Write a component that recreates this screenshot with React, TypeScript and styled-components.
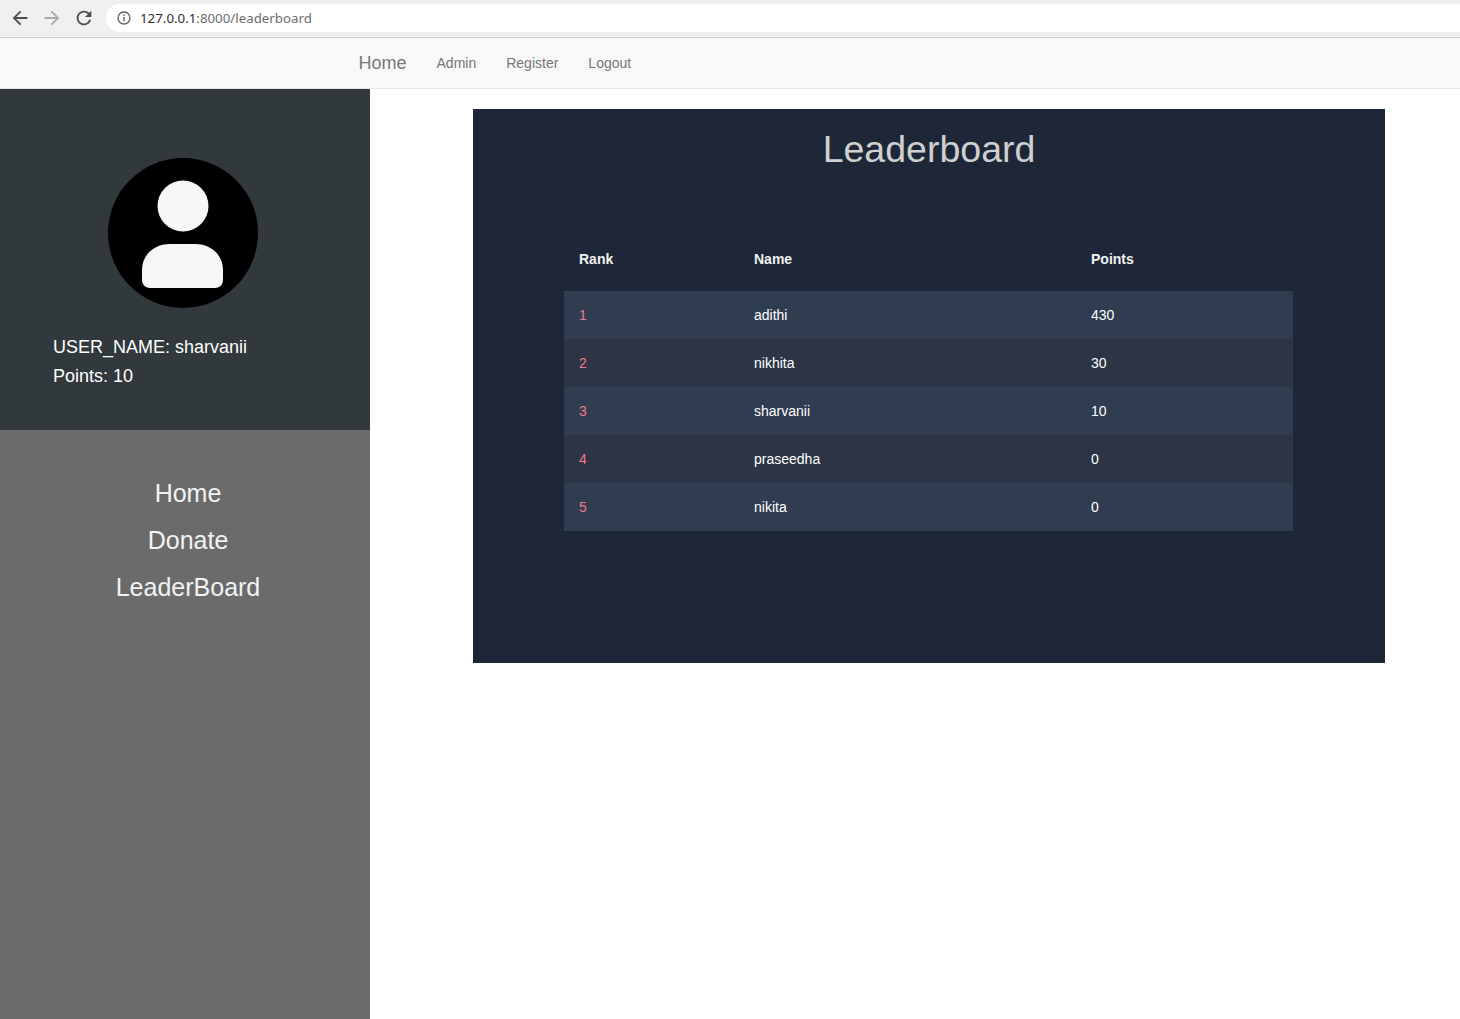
import { createGlobalStyle, styled } from "styled-components"

const GlobalStyle = createGlobalStyle`
html, body {
    margin: 0;
    padding: 0;
    background: #fff;
    font-family: "Liberation Sans", Arial, sans-serif;
}
* {
    box-sizing: border-box;
}
`

const Page = styled.div`
min-height: 100vh;
display: flex;
flex-direction: column;
overflow: hidden;
`

const BrowserBar = styled.div`
height: 38px;
display: flex;
align-items: flex-start;
padding: 4px 0 0 9px;
background: #f1f0ef;
border-bottom: 1px solid #cfcfcf;
`

const BrowserButton = styled.button<{ $dim?: boolean }>`
width: 22px;
height: 28px;
margin-right: 10px;
padding: 0;
display: flex;
align-items: center;
justify-content: center;
border: 0;
background: none;
color: ${({ $dim }) => ($dim ? "#a9a9a9" : "#4c4c4c")};
`

const AddressBar = styled.div`
flex: 1;
height: 28px;
margin-left: 1px;
padding-left: 11px;
display: flex;
align-items: center;
gap: 9px;
background: #fff;
border-radius: 14px 0 0 14px;
font-family: "Noto Sans", sans-serif;
font-size: 13.3px;
color: #6c6c6c;

b {
    font-weight: 400;
    color: #2e2e2e;
}
`

const Navbar = styled.nav`
height: 51px;
padding-left: 343.5px;
display: flex;
align-items: center;
background: #f8f8f8;
border-bottom: 1px solid #e7e7e7;
`

const NavLink = styled.a<{ $brand?: boolean }>`
padding: 0 15px;
color: #777;
font-size: ${({ $brand }) => ($brand ? "18px" : "14px")};
`

const Body = styled.div`
flex: 1;
display: flex;
`

const Sidebar = styled.aside`
width: 370px;
display: flex;
flex-direction: column;
background: #6b6b6b;
`

const Profile = styled.div`
height: 341px;
padding: 69px 0 0 53px;
background: #31393c;
color: #fff;
font-size: 18px;
`

const Avatar = styled.svg`
display: block;
width: 150px;
height: 150px;
margin: 0 0 25px 55px;
`

const ProfileLine = styled.div`
line-height: 29px;
`

const SideMenu = styled.ul`
margin: 0;
padding: 40px 0 0 6px;
list-style: none;
text-align: center;
`

const SideItem = styled.li`
height: 47px;
line-height: 47px;
font-size: 25px;
color: #f2f2f2;
`

const Main = styled.main`
flex: 1;
padding: 20px 0 0 103px;
`

const Panel = styled.section`
width: 912px;
height: 554px;
padding-top: 19px;
background: #1e2738;
`

const Title = styled.h1`
margin: 0;
text-align: center;
font-size: 37.5px;
line-height: 43px;
font-weight: 400;
color: #d0d0d0;
`

const Table = styled.table`
width: 729px;
margin: 56px 0 0 91px;
border-collapse: collapse;
table-layout: fixed;
font-size: 14px;
color: #fff;
`

const HeadCell = styled.th<{ $width: number }>`
width: ${({ $width }) => $width}px;
height: 64px;
padding: 0 0 0 15px;
text-align: left;
font-weight: 700;
color: #f2f2f2;
`

const Row = styled.tr`
&:nth-child(odd) {
    background: #303c50;
}
&:nth-child(even) {
    background: #2c3445;
}
`

const Cell = styled.td<{ $rank?: boolean }>`
position: relative;
height: 48px;
padding: 0 0 0 15px;
color: ${({ $rank }) => ($rank ? "#f27a8c" : "#fff")};
box-shadow: 0 2px 2px -2px #0e1119;
`

const players = [
    { name: "adithi", points: 430 },
    { name: "nikhita", points: 30 },
    { name: "sharvanii", points: 10 },
    { name: "praseedha", points: 0 },
    { name: "nikita", points: 0 },
]

export default function App() {
    return (
        <Page>
            <GlobalStyle />
            <BrowserBar>
                <BrowserButton>
                    <svg width="22" height="22" viewBox="0 0 24 24" fill="currentColor">
                        <path d="M20 11H7.83l5.59-5.59L12 4l-8 8 8 8 1.41-1.41L7.83 13H20v-2z" />
                    </svg>
                </BrowserButton>
                <BrowserButton $dim>
                    <svg width="22" height="22" viewBox="0 0 24 24" fill="currentColor">
                        <path d="M12 4l-1.41 1.41L16.17 11H4v2h12.17l-5.58 5.59L12 20l8-8z" />
                    </svg>
                </BrowserButton>
                <BrowserButton>
                    <svg width="22" height="22" viewBox="0 0 24 24" fill="currentColor">
                        <path d="M17.65 6.35C16.2 4.9 14.21 4 12 4c-4.42 0-7.99 3.58-7.99 8s3.57 8 7.99 8c3.73 0 6.84-2.55 7.73-6h-2.08c-.82 2.33-3.04 4-5.65 4-3.31 0-6-2.69-6-6s2.69-6 6-6c1.66 0 3.14.69 4.22 1.78L13 11h7V4l-2.35 2.35z" />
                    </svg>
                </BrowserButton>
                <AddressBar>
                    <svg width="14" height="14" viewBox="0 0 14 14" fill="none" stroke="#5f5f5f">
                        <circle cx="7" cy="7" r="6" strokeWidth="1.3" />
                        <path d="M7 6v4.2M7 3.4v1.5" strokeWidth="1.4" />
                    </svg>
                    <span><b>127.0.0.1</b>:8000/leaderboard</span>
                </AddressBar>
            </BrowserBar>
            <Navbar>
                <NavLink $brand>Home</NavLink>
                <NavLink>Admin</NavLink>
                <NavLink>Register</NavLink>
                <NavLink>Logout</NavLink>
            </Navbar>
            <Body>
                <Sidebar>
                    <Profile>
                        <Avatar viewBox="0 0 150 150">
                            <circle cx="75" cy="75" r="75" fill="#000" />
                            <circle cx="75" cy="48" r="25.5" fill="#f6f6f6" />
                            <path
                                d="M34 112C34 97 46 86 62 86H87C103 86 115 97 115 112V122C115 127 111 130 107 130H42C38 130 34 127 34 122Z"
                                fill="#f6f6f6"
                            />
                        </Avatar>
                        <ProfileLine>USER_NAME: sharvanii</ProfileLine>
                        <ProfileLine>Points: 10</ProfileLine>
                    </Profile>
                    <SideMenu>
                        <SideItem>Home</SideItem>
                        <SideItem>Donate</SideItem>
                        <SideItem>LeaderBoard</SideItem>
                    </SideMenu>
                </Sidebar>
                <Main>
                    <Panel>
                        <Title>Leaderboard</Title>
                        <Table>
                            <thead>
                                <tr>
                                    <HeadCell $width={175}>Rank</HeadCell>
                                    <HeadCell $width={337}>Name</HeadCell>
                                    <HeadCell $width={217}>Points</HeadCell>
                                </tr>
                            </thead>
                            <tbody>
                                {players.map((p, i) => (
                                    <Row key={p.name}>
                                        <Cell $rank>{i + 1}</Cell>
                                        <Cell>{p.name}</Cell>
                                        <Cell>{p.points}</Cell>
                                    </Row>
                                ))}
                            </tbody>
                        </Table>
                    </Panel>
                </Main>
            </Body>
        </Page>
    )
}
